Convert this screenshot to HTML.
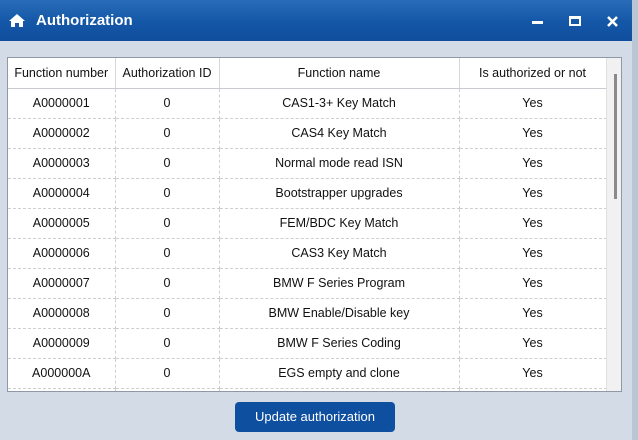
<!DOCTYPE html>
<html><head><style>
*{margin:0;padding:0;box-sizing:border-box}
body{width:638px;height:440px;overflow:hidden;background:#d3dbe7;font-family:"Liberation Sans",sans-serif;position:relative}
.tb{position:absolute;left:0;top:0;width:632px;height:41px;background:linear-gradient(#2a6cb8,#1558a8 50%,#0f4d9c);color:#fff}
.tb .t{position:absolute;left:36px;top:12px;font-size:15px;font-weight:bold}
.edge{position:absolute;left:632px;top:0;width:6px;height:440px;background:#b9c6d6}
.box{position:absolute;left:7px;top:57px;width:615px;height:335px;background:#fff;border:1px solid #8f99a6;overflow:hidden}
table{position:absolute;left:0;top:0;border-collapse:collapse;font-size:12.5px;color:#111}
td,th{height:30px;text-align:center;font-weight:normal;border-right:1px dashed #cfcfcf;border-bottom:1px dashed #cfcfcf}
th{border-right:1px solid #d8d8d8;border-bottom:1px solid #c8ccd0}
.sb{position:absolute;left:598px;top:0;width:16px;height:335px;background:#f1f1f1;border-left:1px solid #e0e0e0}
.th{position:absolute;left:7px;top:16px;width:3px;height:125px;background:#8a8a8a}
.btn{position:absolute;left:235px;top:402px;width:160px;height:30px;background:#0f4f9f;border-radius:4px;color:#fff;font-size:13px;text-align:center;line-height:30px}
</style></head><body>
<div class="tb">
<svg style="position:absolute;left:9px;top:14px" width="16" height="13" viewBox="0 0 16 13"><path d="M8 0L0 7h2v6h4V9h4v4h4V7h2z" fill="#fff"/></svg>
<div class="t">Authorization</div>
<div style="position:absolute;left:532px;top:21px;width:11px;height:3px;background:#fff"></div>
<div style="position:absolute;left:569px;top:16px;width:12px;height:10px;border:2px solid #fff;border-top-width:3px"></div>
<svg style="position:absolute;left:607px;top:16px" width="11" height="11" viewBox="0 0 11 11"><path d="M1 1L10 10M10 1L1 10" stroke="#fff" stroke-width="2.6"/></svg>
</div>
<div class="edge"></div>
<div class="box">
<table>
<tr><th style="width:107px">Function number</th><th style="width:104px">Authorization ID</th><th style="width:240px">Function name</th><th style="width:147px">Is authorized or not</th></tr>
<tr><td>A0000001</td><td>0</td><td>CAS1-3+ Key Match</td><td>Yes</td></tr>
<tr><td>A0000002</td><td>0</td><td>CAS4 Key Match</td><td>Yes</td></tr>
<tr><td>A0000003</td><td>0</td><td>Normal mode read ISN</td><td>Yes</td></tr>
<tr><td>A0000004</td><td>0</td><td>Bootstrapper upgrades</td><td>Yes</td></tr>
<tr><td>A0000005</td><td>0</td><td>FEM/BDC Key Match</td><td>Yes</td></tr>
<tr><td>A0000006</td><td>0</td><td>CAS3 Key Match</td><td>Yes</td></tr>
<tr><td>A0000007</td><td>0</td><td>BMW F Series Program</td><td>Yes</td></tr>
<tr><td>A0000008</td><td>0</td><td>BMW Enable/Disable key</td><td>Yes</td></tr>
<tr><td>A0000009</td><td>0</td><td>BMW F Series Coding</td><td>Yes</td></tr>
<tr><td>A000000A</td><td>0</td><td>EGS empty and clone</td><td>Yes</td></tr>
<tr><td></td><td></td><td></td><td></td></tr>
</table>
<div class="sb"><div class="th"></div></div>
</div>
<div class="btn">Update authorization</div>
</body></html>
